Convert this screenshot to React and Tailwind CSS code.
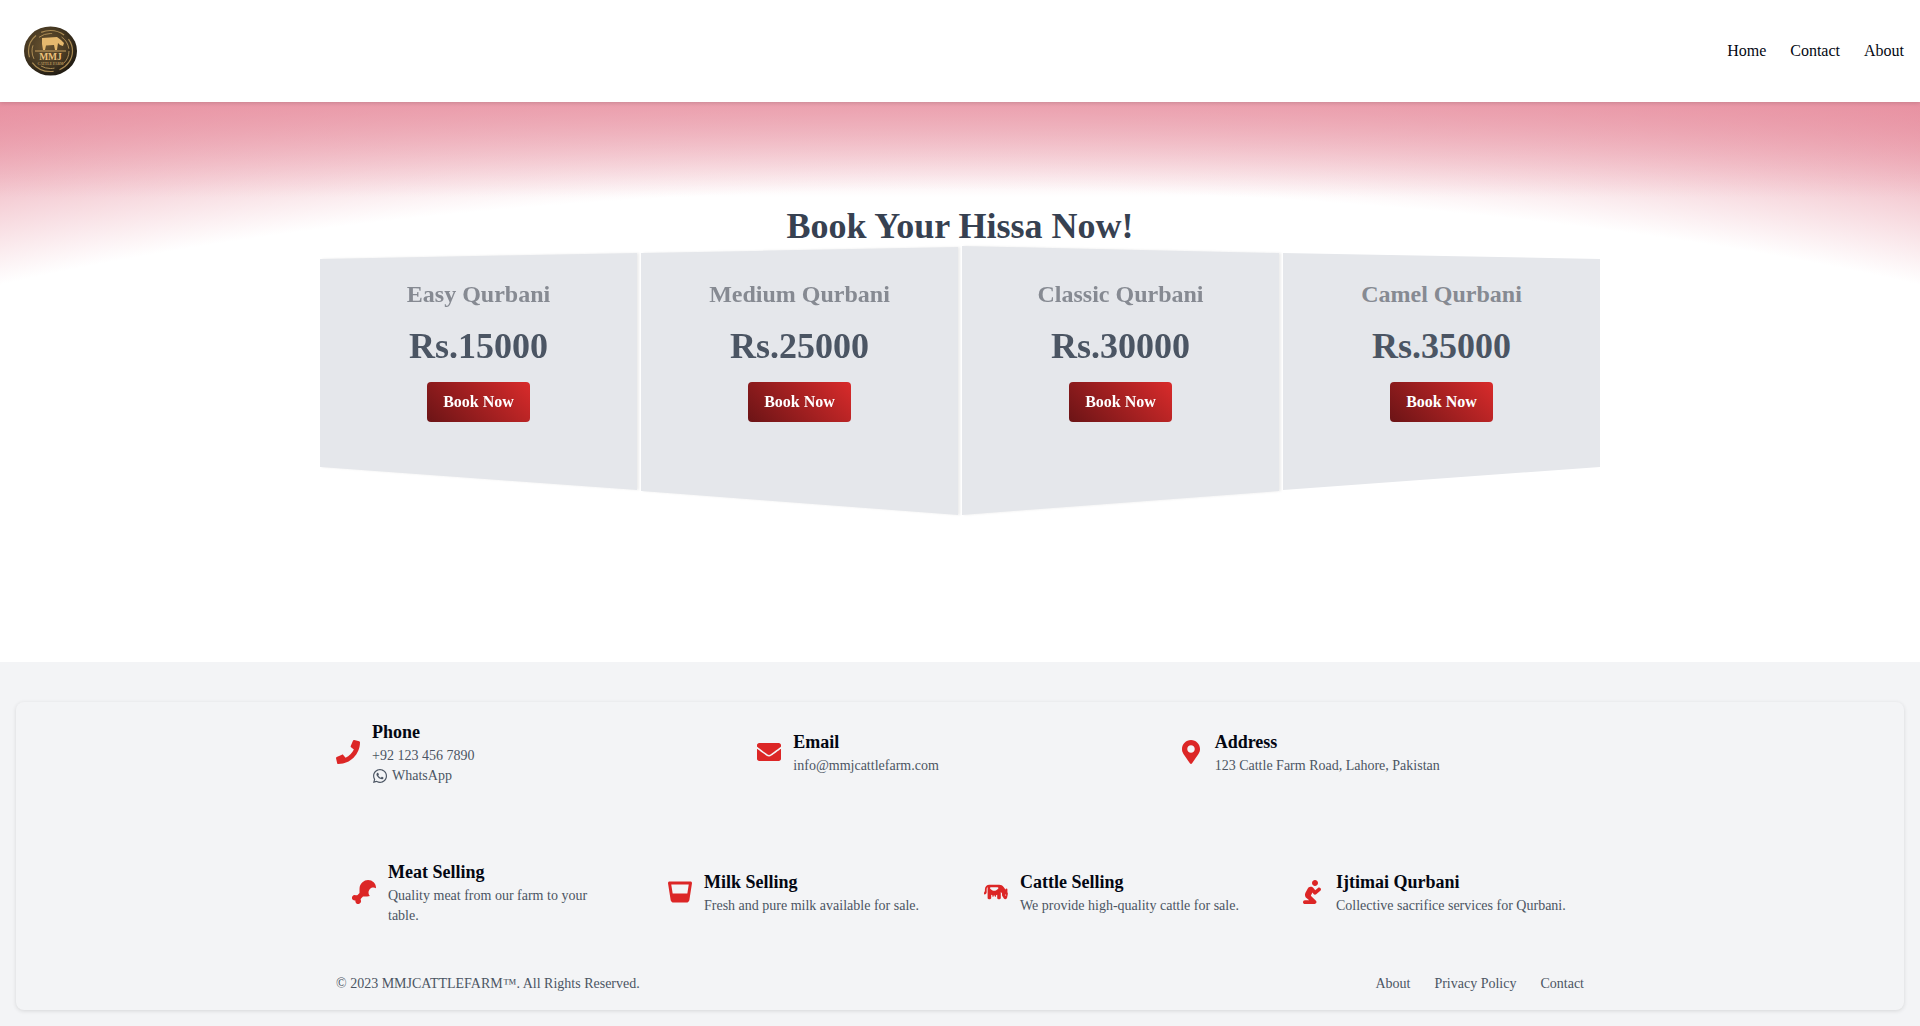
import React from "react";
import { FaPhone, FaEnvelope, FaMapMarkerAlt, FaWhatsapp, FaDrumstickBite, FaGlassWhiskey, FaPray } from "react-icons/fa";
import { FaCow } from "react-icons/fa6";

const plans = [
  { name: "Easy Qurbani", price: "Rs.15000", wrap: "drop-shadow-[2px_0_1px_rgba(0,0,0,0.07)]", clip: "[clip-path:polygon(0_13px,100%_7px,100%_244px,0_221px)]" },
  { name: "Medium Qurbani", price: "Rs.25000", wrap: "drop-shadow-[2px_0_1px_rgba(0,0,0,0.07)]", clip: "[clip-path:polygon(0_7px,100%_1px,100%_269px,0_245px)]" },
  { name: "Classic Qurbani", price: "Rs.30000", wrap: "drop-shadow-[2px_0_1px_rgba(0,0,0,0.07)]", clip: "[clip-path:polygon(0_0,100%_7px,100%_245px,0_269px)]" },
  { name: "Camel Qurbani", price: "Rs.35000", wrap: "", clip: "[clip-path:polygon(0_7px,100%_13px,100%_221px,0_244px)]" },
];

const services = [
  { Icon: FaDrumstickBite, title: "Meat Selling", text: "Quality meat from our farm to your table." },
  { Icon: FaGlassWhiskey, title: "Milk Selling", text: "Fresh and pure milk available for sale." },
  { Icon: FaCow, title: "Cattle Selling", text: "We provide high-quality cattle for sale." },
  { Icon: FaPray, title: "Ijtimai Qurbani", text: "Collective sacrifice services for Qurbani." },
];

function Logo() {
  return (
    <svg width="53" height="50" viewBox="0 0 53 50" aria-label="MMJ Cattle Farm logo">
      <defs>
        <radialGradient id="lg" cx="42%" cy="40%" r="62%">
          <stop offset="0%" stopColor="#6a5430" />
          <stop offset="65%" stopColor="#463822" />
          <stop offset="100%" stopColor="#1f1a12" />
        </radialGradient>
      </defs>
      <ellipse cx="26.5" cy="25" rx="26.5" ry="24.5" fill="url(#lg)" />
      <ellipse cx="26.5" cy="25" rx="22" ry="20.5" fill="none" stroke="#a98a52" strokeWidth="1.2" strokeDasharray="24 6" />
      <ellipse cx="26.5" cy="25" rx="18.5" ry="17.5" fill="none" stroke="#b8955a" strokeWidth="0.9" strokeDasharray="14 10" />
      <path d="M18 12L33 11L37 14L40 17L39 20L36 19L34 17L33 24L31 24L30 19L22 19.5L21 24L19 24L18 18Z" fill="#e6b96e" />
      <rect x="11" y="24.5" width="31" height="1" fill="#caa05f" />
      <text x="26.5" y="33.5" textAnchor="middle" fontFamily="'Liberation Serif', serif" fontWeight="700" fontSize="9.5" fill="#eec27c">MMJ</text>
      <text x="26.5" y="38.5" textAnchor="middle" fontFamily="'Liberation Serif', serif" fontWeight="700" fontSize="3.6" fill="#b8955a">CATTLE FARM</text>
    </svg>
  );
}

function IconBox({ Icon }) {
  return (
    <span className="w-6 h-6 mr-3 shrink-0 flex items-center justify-center text-[#dc2626]">
      <Icon className="w-full h-full" />
    </span>
  );
}

function Contact({ Icon, title, children }) {
  return (
    <div className="flex items-center">
      <IconBox Icon={Icon} />
      <div>
        <h3 className="text-lg leading-7 font-bold text-[#030712]">{title}</h3>
        {children}
      </div>
    </div>
  );
}

export default function App() {
  return (
    <div className="min-h-[1026px] bg-white font-['Liberation_Serif',serif] flex flex-col">
      <header className="relative z-10 h-[102px] shrink-0 bg-white flex items-center justify-between pl-6 pr-4 shadow-[0_1px_4px_rgba(0,0,0,0.15)]">
        <Logo />
        <nav className="flex gap-6 text-base text-[#030712]">
          <a>Home</a>
          <a>Contact</a>
          <a>About</a>
        </nav>
      </header>

      <main className="relative h-[560px] shrink-0 pt-[104px] bg-[linear-gradient(to_bottom,rgba(232,146,162,0.7),rgba(232,146,162,0)_95px),radial-gradient(1484px_400px_at_50%_488px,#ffffff_100%,#e892a2_138%)]">
        <h2 className="text-4xl font-bold text-center text-[#374151]">Book Your Hissa Now!</h2>
        <div className="max-w-[1280px] mx-auto grid grid-cols-4 gap-1">
          {plans.map((p) => (
            <div key={p.name} className={p.wrap}>
              <div className={`h-[269px] bg-[#e5e7eb] text-center pt-[32px] ${p.clip}`}>
                <h3 className="text-2xl font-bold text-[#868a92]">{p.name}</h3>
                <p className="text-4xl font-bold text-[#4b5563] mt-[16px]">{p.price}</p>
                <button className="mt-[16px] h-10 px-4 rounded-[4px] text-base font-bold text-white bg-[linear-gradient(45deg,#6b1416,#d92b2b)]">
                  Book Now
                </button>
              </div>
            </div>
          ))}
        </div>
      </main>

      <footer className="flex-1 bg-[#f3f4f6] pt-10 px-4 pb-4">
        <div className="rounded-lg bg-[#f3f4f6] shadow-[0_1px_4px_rgba(0,0,0,0.12)] h-[308px] pt-4">
          <div className="max-w-[1280px] mx-auto px-4">
            <div className="grid grid-cols-3 gap-4 h-[68px]">
              <Contact Icon={FaPhone} title="Phone">
                <p className="text-sm text-[#4b5563]">+92 123 456 7890</p>
                <p className="text-sm text-[#4b5563] flex items-center gap-1">
                  <FaWhatsapp className="w-4 h-4" />
                  WhatsApp
                </p>
              </Contact>
              <Contact Icon={FaEnvelope} title="Email">
                <p className="text-sm text-[#4b5563]">info@mmjcattlefarm.com</p>
              </Contact>
              <Contact Icon={FaMapMarkerAlt} title="Address">
                <p className="text-sm text-[#4b5563]">123 Cattle Farm Road, Lahore, Pakistan</p>
              </Contact>
            </div>

            <div className="grid grid-cols-4 gap-4 mt-14">
              {services.map(({ Icon, title, text }) => (
                <div key={title} className="flex items-center p-4 h-[100px]">
                  <IconBox Icon={Icon} />
                  <div>
                    <h3 className="text-lg leading-7 font-bold text-[#030712]">{title}</h3>
                    <p className="text-sm text-[#4b5563]">{text}</p>
                  </div>
                </div>
              ))}
            </div>

            <div className="flex justify-between text-sm text-[#4b5563] mt-8">
              <p>© 2023 MMJCATTLEFARM™. All Rights Reserved.</p>
              <div className="flex gap-6">
                <a>About</a>
                <a>Privacy Policy</a>
                <a>Contact</a>
              </div>
            </div>
          </div>
        </div>
      </footer>
    </div>
  );
}
